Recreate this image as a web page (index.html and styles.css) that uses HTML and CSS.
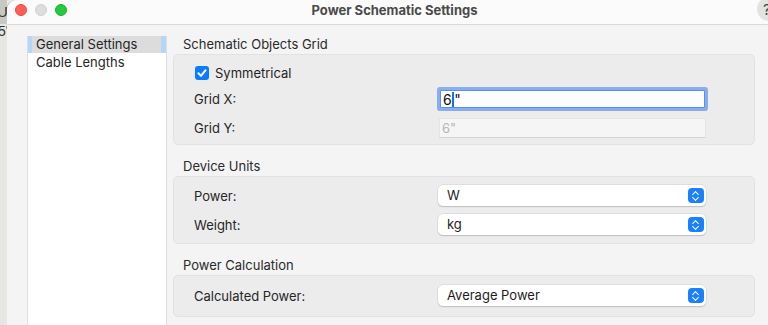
FILE: index.html
```html
<!DOCTYPE html>
<html lang="en">

<head>
    <meta charset="UTF-8">
    <title>Power Schematic Settings</title>
    <link rel="stylesheet" href="styles.css">
</head>

<body>
    <div class="desk">
        <span class="desk-top">U</span>
        <span class="desk-ruler">5'</span>
    </div>

    <main class="window">
        <header class="titlebar">
            <div class="lights">
                <span class="light red"></span>
                <span class="light gray"></span>
                <span class="light green"></span>
            </div>
            <h1>Power Schematic Settings</h1>
            <span class="help">?</span>
        </header>

        <div class="content">
            <ul class="sidebar">
                <li class="selected">General Settings</li>
                <li>Cable Lengths</li>
            </ul>

            <section class="settings">
                <h2>Schematic Objects Grid</h2>
                <div class="group grid-group">
                    <div class="row check-row">
                        <span class="checkbox">
                            <svg viewBox="0 0 14 14" width="14" height="14">
                                <path d="M3.4 7.3 L6 9.9 L10.6 4.2" fill="none" stroke="#fff" stroke-width="2" stroke-linecap="round" stroke-linejoin="round"/>
                            </svg>
                        </span>
                        <span class="check-label">Symmetrical</span>
                    </div>
                    <div class="row">
                        <span class="label">Grid X:</span>
                        <div class="field focus">6<span class="caret"></span>"</div>
                    </div>
                    <div class="row">
                        <span class="label">Grid Y:</span>
                        <div class="field disabled">6"</div>
                    </div>
                </div>

                <h2>Device Units</h2>
                <div class="group units-group">
                    <div class="row">
                        <span class="label">Power:</span>
                        <div class="select">W<span class="stepper"></span></div>
                    </div>
                    <div class="row">
                        <span class="label">Weight:</span>
                        <div class="select">kg<span class="stepper"></span></div>
                    </div>
                </div>

                <h2>Power Calculation</h2>
                <div class="group calc-group">
                    <div class="row">
                        <span class="label">Calculated Power:</span>
                        <div class="select">Average Power<span class="stepper"></span></div>
                    </div>
                </div>
            </section>
        </div>
    </main>
</body>

</html>
```

FILE: styles.css
```css
* {
    box-sizing: border-box;
}

html,
body {
    margin: 0;
    height: 325px;
    overflow: hidden;
}

body {
    display: flex;
    font-family: "Inter", "Liberation Sans", sans-serif;
    font-size: 13px;
    color: #262626;
    background-color: #e9e9e6;
}

/* strip of the app behind the dialog */
.desk {
    width: 7px;
    flex-shrink: 0;
    overflow: hidden;
    background: linear-gradient(#c9c9c4 0, #c9c9c4 24px, #e6e6e2 24px);
    position: relative;
    font-family: "Liberation Sans", sans-serif;
}

.desk-top {
    position: absolute;
    left: -3px;
    top: 3px;
    font-size: 15px;
    color: #333;
}

.desk-ruler {
    position: absolute;
    left: -2px;
    top: 23px;
    font-size: 14px;
    color: #333;
}

.window {
    flex: 1;
    display: flex;
    flex-direction: column;
    background-color: #f4f4f4;
    border-top-left-radius: 10px;
    overflow: hidden;
    box-shadow: -1px 0 0 #b9b9b6;
}

.titlebar {
    height: 25px;
    flex-shrink: 0;
    background-color: #fbfbfb;
    border-bottom: 1px solid #d9d9d9;
    position: relative;
    display: flex;
    align-items: center;
}

.lights {
    display: flex;
    gap: 8px;
    padding-left: 8px;
    margin-top: -4px;
}

.light {
    width: 12px;
    height: 12px;
    border-radius: 50%;
}

.red {
    background-color: #fe5f57;
    border: 1px solid #e8493f;
}

.gray {
    background-color: #dddddd;
    border: 1px solid #cfcfcf;
}

.green {
    background-color: #28c840;
    border: 1px solid #1fae34;
}

.titlebar h1 {
    position: absolute;
    left: 0;
    right: -14px;
    top: 2px;
    margin: 0;
    text-align: center;
    font-size: 13px;
    font-weight: 700;
    color: #4a4a4a;
}

.help {
    position: absolute;
    left: 750px;
    top: -3px;
    width: 24px;
    height: 24px;
    border-radius: 50%;
    background-color: #e3e3e3;
    font-size: 15px;
    color: #444;
    padding-left: 6px;
    line-height: 25px;
}

.content {
    flex: 1;
    display: flex;
    gap: 6px;
    padding: 11px 13px 0 20px;
}

.sidebar {
    list-style: none;
    margin: 0;
    padding: 0;
    width: 140px;
    flex-shrink: 0;
    background-color: #fff;
    border-left: 1px solid #dedede;
    border-right: 1px solid #dedede;
}

.sidebar li {
    height: 17px;
    line-height: 17px;
    padding-left: 8px;
    margin-bottom: 1px;
}

.sidebar .selected {
    background-color: #dcdcdc;
    border-left: 4px solid #b5d6fb;
    border-right: 5px solid #b5d6fb;
    padding-left: 4px;
}

.settings {
    flex: 1;
}

.settings h2 {
    margin: 0;
    font-size: 13px;
    font-weight: 400;
    color: #2a2a2a;
    line-height: 17px;
    padding: 0 0 1px 10px;
}

.group {
    background-color: #ececec;
    border: 1px solid #e2e2e2;
    border-radius: 5px;
    padding: 0 46px 0 20px;
    margin-bottom: 13px;
}

.grid-group {
    padding-top: 7px;
    padding-bottom: 2px;
}

.units-group {
    padding-top: 4px;
    padding-bottom: 4px;
}

.calc-group {
    padding-top: 5px;
    padding-bottom: 6px;
}

.row {
    height: 29px;
    display: grid;
    grid-template-columns: 243px 1fr;
    align-items: center;
}

.check-row {
    height: 22px;
    display: flex;
    gap: 6px;
}

.checkbox {
    width: 14px;
    height: 14px;
    border-radius: 3px;
    background-color: #0b7bfd;
    display: flex;
    margin-left: 1px;
}

.check-label {
    color: #1f1f1f;
}

.field {
    height: 18px;
    line-height: 18px;
    padding-left: 2px;
    font-size: 13px;
}

.field.focus {
    margin: 0 3px;
    background-color: #fff;
    border: 1px solid #5d8fe4;
    box-shadow: 0 0 0 3px #88aef0;
    border-radius: 1px;
    color: #111;
    font-size: 14px;
}

.caret {
    display: inline-block;
    width: 1.5px;
    height: 15px;
    background-color: #1a6ee8;
    vertical-align: -2px;
    margin: 0 0.5px;
}

.field.disabled {
    margin: 0 2px;
    height: 20px;
    background-color: #f5f5f5;
    border: 1px solid #e4e4e4;
    border-bottom-color: #d4d4d4;
    color: #b5b5b5;
}

.select {
    margin: 0 2px 0 1px;
    height: 21px;
    line-height: 21px;
    padding-left: 9px;
    background-color: #fff;
    border-radius: 5px;
    box-shadow: 0 0 0 0.5px #d0d0d0, 0 1px 1px rgba(0, 0, 0, 0.25);
    position: relative;
    color: #1d1d1d;
}

.stepper {
    position: absolute;
    right: 2px;
    top: 3px;
    width: 16px;
    height: 15px;
    border-radius: 4px;
    background-color: #1a80fb;
}

.stepper::before,
.stepper::after {
    content: "";
    position: absolute;
    left: 5px;
    width: 4px;
    height: 4px;
    border-left: 1.5px solid #fff;
    border-top: 1.5px solid #fff;
}

.stepper::before {
    top: 3.5px;
    transform: rotate(45deg);
}

.stepper::after {
    top: 6.5px;
    transform: rotate(225deg);
}
```
